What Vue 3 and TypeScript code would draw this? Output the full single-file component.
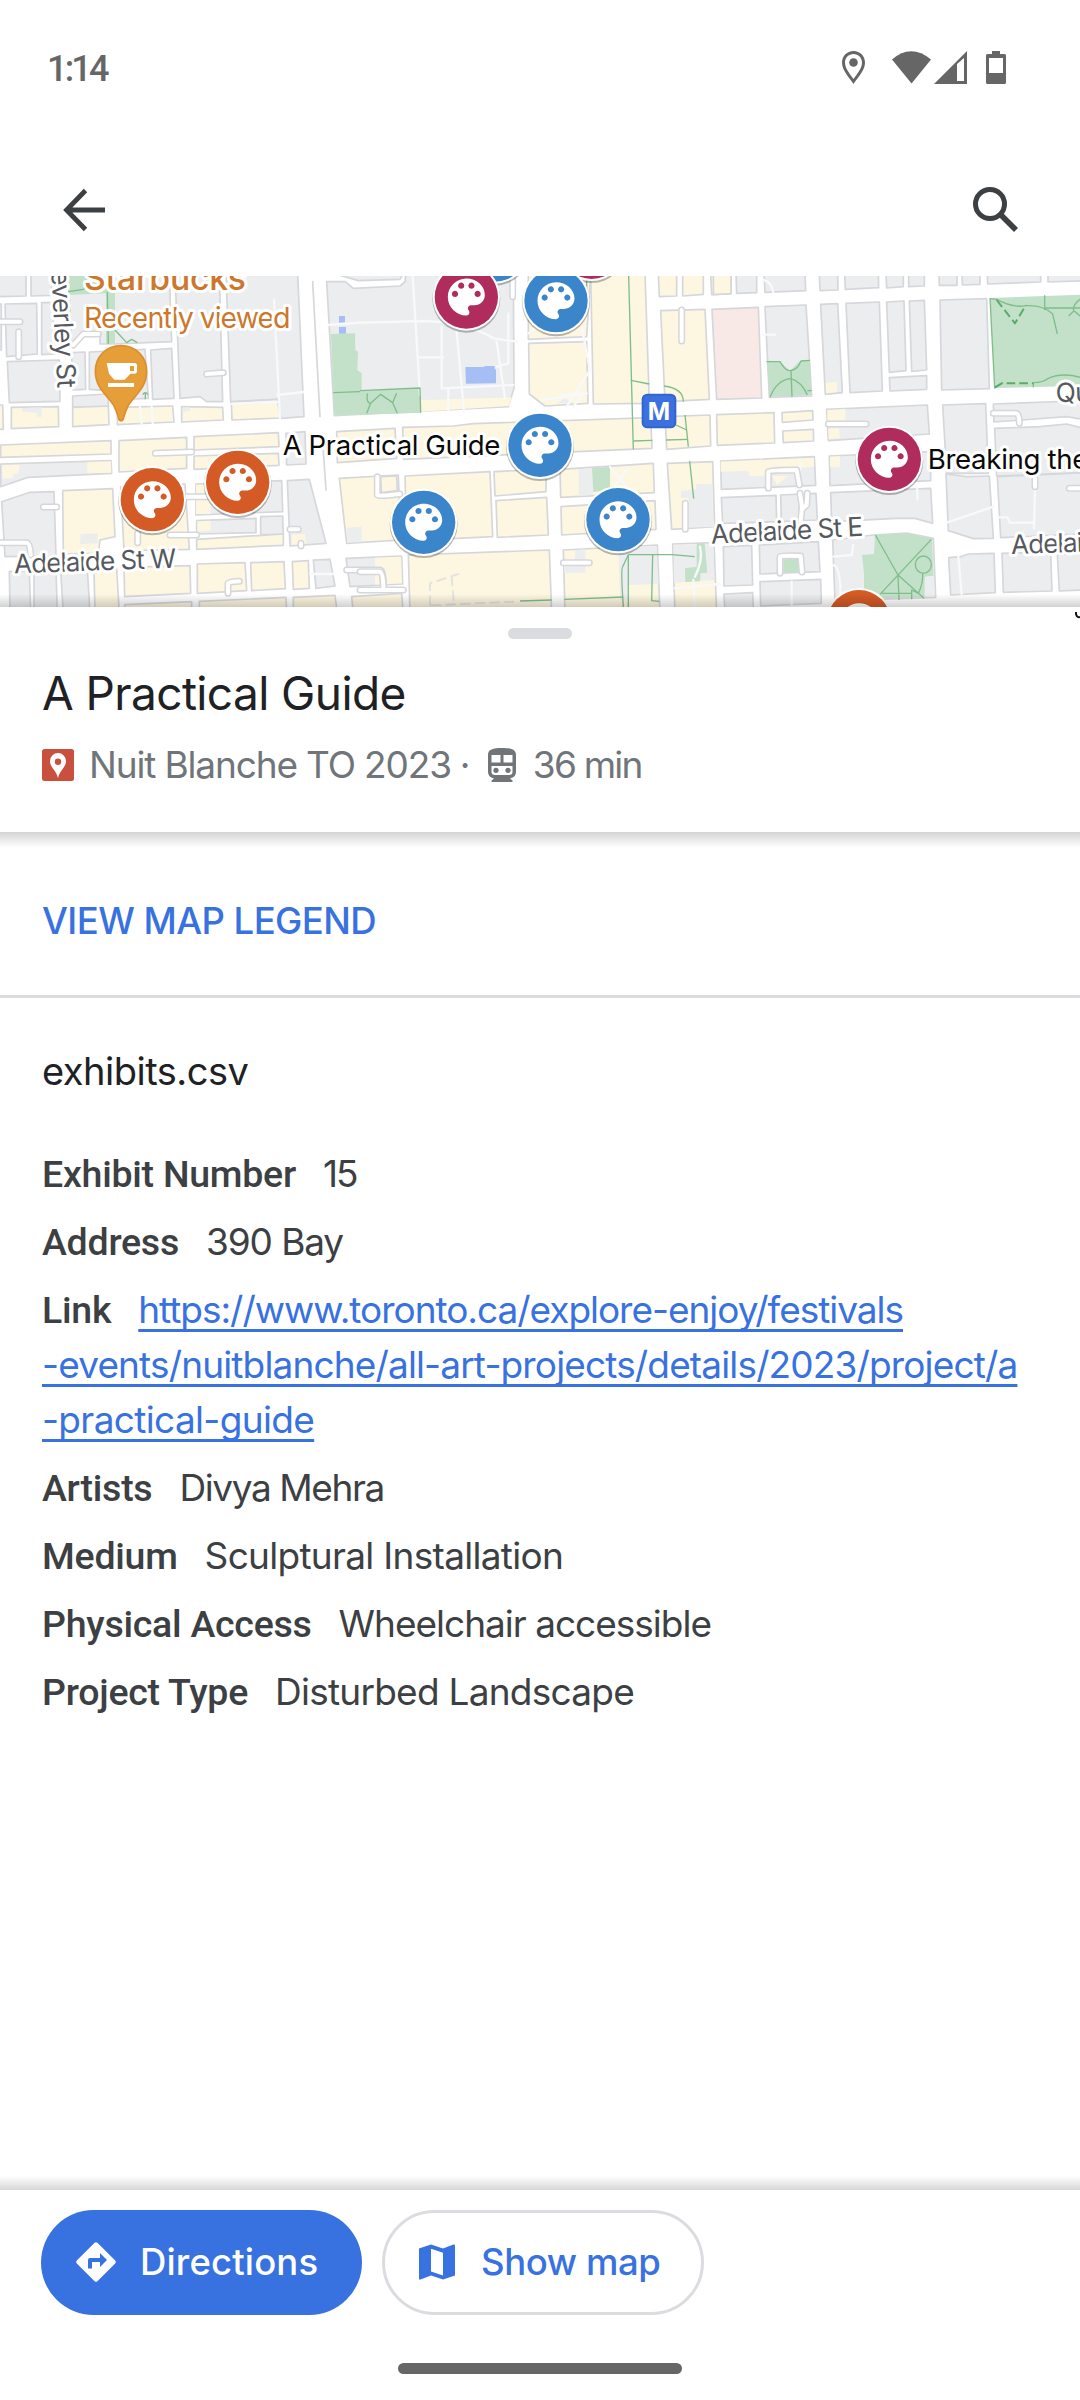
<script setup lang="ts">
interface Block { c: string; p: string }
interface Tile { x: number; blocks: Block[]; roads: string[]; faint: string[]; paths: string[] }
interface Marker { x: number; y: number; c: string }
interface Field { label: string; value: string; key: string }

const parse = (c: string, list: string): Block[] => list.trim().split(/\s*;\s*/).filter(Boolean).map((p) => ({ c, p }))

// Map geometry is kept at three units per pixel, in three tiles of 1080 units.
const tiles: Tile[] = [
  {
    x: 0,
    blocks: [
      ...parse('g', `-10,40 78,40 78,108 -10,110; 93,40 155,40 155,106 93,108; 205,40 508,40 515,245 345,252 300,252 300,218 250,222 215,255;
        525,40 658,40 668,425 620,425 600,410 540,415; 678,40 893,40 912,470 842,475 832,418 692,425; 1000,40 1210,40 1200,58 1075,62;
        980,65 1036,65 1060,85 1200,78 1215,65 1218,40 1540,40 1542,385 1525,440 1003,467; 15,132 110,130 112,282 20,290; -10,132 4,132 4,270 -10,270; 125,128 158,128 165,282 125,284;
        22,305 178,300 180,424 28,428; 215,278 255,276 257,388 218,390; 268,276 435,268 445,415 330,420 325,392 268,388; 452,270 515,265 522,415 458,418;
        2,612 333,602 335,640 85,652 2,680; 858,520 915,515 918,612 860,615; 5,725 90,697 162,695 168,888 15,890; 588,672 845,662 848,755 588,765;
        590,782 768,775 768,818 590,822; 782,770 848,768 850,824 782,824; 862,662 928,658 978,850 870,858; 28,935 88,932 92,1060 30,1060; 102,935 168,930 172,1060 102,1060;
        182,932 262,928 270,1060 190,1060; 940,900 990,898 1005,978 948,985; 1038,895 1205,888 1208,972 1050,980; 218,408 325,402 325,440 218,442`),
      ...parse('y', `34,442 175,440 176,500 34,506; -10,435 8,435 10,508 -10,508; 218,442 325,438 327,494 218,500; 352,442 518,438 522,486 352,494; 545,440 668,442 670,480 545,486; 694,426 832,418 842,474 696,480;
        2,555 333,542 333,582 2,592; 357,542 560,532 560,625 357,636; 582,530 835,518 837,560 582,570; 582,588 835,580 837,616 582,628;
        1010,515 1185,505 1190,595 1012,608; 188,692 338,686 345,830 300,840 295,880 190,882; 362,680 555,672 568,868 372,872; 590,838 850,822 850,856 590,868;
        1018,655 1195,645 1202,840 1040,850; 282,930 350,925 358,1060 285,1060; 372,922 570,917 572,1000 374,1010; 374,1034 575,1025 575,1060 374,1060;
        592,912 735,908 740,992 592,1000; 752,908 852,905 856,986 755,992; 598,1024 858,1012 860,1060 598,1060; 877,905 925,902 928,985 880,988;
        880,1012 1005,1006 1012,1060 880,1060; 1055,1010 1205,1000 1210,1060 1060,1060`),
      ...parse('gf', '66,444 125,442 125,470 112,470 110,458 66,455; 242,823 293,820 293,850 240,852; 1040,803 1085,800 1085,846 1042,848; 548,442 570,442 570,452 548,455'),
      ...parse('yf', '5,616 58,614 56,640 40,642 38,654 8,656; 262,606 333,604 334,638 262,640; 588,674 628,674 632,762 588,762; 592,784 632,782 632,812 592,814; 875,824 915,822 918,852 876,854; 1125,893 1203,890 1206,970 1125,974'),
      ...parse('n', '205,40 345,40 345,250 318,252 318,100 205,105; 993,222 1065,220 1066,270 1074,275 1072,330 1085,340 1085,393 1258,387 1262,458 1003,466'),
      ...parse('b', '1017,168 1035,168 1035,188 1017,188; 1017,201 1038,201 1038,221 1017,221')
    ],
    roads: ['M-10 185H60', 'M56 215V290', 'M620 342L670 338', 'M466 580L575 576', 'M130 741H170', 'M413 820V848', 'M510 825H590', 'M545 710H640', 'M0 848H80Q90 848 92 885', 'M684 1000V970Q690 965 718 964', 'M870 808H895', 'M903 850V858', 'M1040 930H1140Q1150 930 1150 975', 'M220 255L250 222H295'],
    faint: ['M822 120L840 475', 'M832 405L912 396', 'M696 432L832 426', 'M420 440L425 492', 'M455 440L458 490', 'M930 942H1000', 'M985 195L1080 188'],
    paths: ['M205 95L250 88L300 48', 'M322 95L325 252', 'M345 210L380 248L395 238L412 248', 'M1000 398L1080 395', 'M436 400v18M428 404q8 -12 16 0']
  },
  {
    x: 1080,
    blocks: [
      ...parse('y', `505,40 692,40 680,230 505,238; 506,250 680,245 684,430 555,438 508,402; 692,40 855,40 868,430 700,432; 895,40 950,40 950,108 898,110;
        968,40 1030,40 1030,103 968,108; 1052,40 1113,40 1113,101 1055,104; 902,152 1035,148 1048,418 915,425; 128,502 280,498 340,491 872,473 876,565 130,598;
        915,470 1050,465 1052,558 920,568; 1070,464 1242,458 1244,549 1072,556; 135,648 390,635 398,830 140,843; 62,650 110,648 112,692 64,698;
        402,635 558,628 558,695 405,708; 408,722 560,712 565,825 412,832; 600,628 880,610 883,698 602,712; 603,740 885,722 888,808 605,825;
        922,610 1058,605 1064,800 935,808; 145,885 568,870 575,1060 150,1060; 610,870 892,855 900,1060 615,1060; 938,852 1062,848 1070,1060 945,1060`),
      ...parse('p', '1056,148 1195,142 1205,414 1070,418'),
      ...parse('yf', '183,420 455,412 448,438 183,455'),
      ...parse('gf', '655,628 700,624 700,705 657,708; 985,690 1008,688 1010,672 1056,672 1060,800 988,803; 645,870 676,868 676,938 612,938 612,908 645,908; 775,862 890,858 896,972 805,975 808,1018 780,1020; 940,856 1060,852 1064,960 942,968; 590,430 615,415 640,430; 963,692 1000,690 1000,712 963,714'),
      ...parse('n', '0,393 178,387 182,458 0,464; 696,624 750,620 750,690 700,696; 1010,852 1034,850 1042,938 1022,940 1020,964 976,966 975,925 1010,920'),
      ...parse('b', '316,321 372,321 374,318 404,318 404,328 408,328 408,370 318,371')
    ],
    roads: ['M965 150V243', 'M976 730V808', 'M610 908H688', 'M0 935H60Q70 940 70 985', 'M0 990H130', 'M52 650V705Q54 710 120 702', 'M458 60V110'],
    faint: ['M0 188L200 183Q330 190 400 235L470 245', 'M158 48L180 405', 'M175 292H250', 'M245 200V385L460 375', 'M290 215L312 455', 'M265 450V385', 'M410 245L435 415', 'M445 160V310L410 320', 'M544 420L680 400', 'M620 440L690 330', 'M600 405L670 400L640 440', 'M665 200L690 330', 'M505 220L560 180', 'M1000 960L1005 1040', 'M945 985L1080 972', 'M750 620L800 680M760 680L800 630', 'M1020 860Q1030 900 1005 950'],
    paths: ['M806 48L820 568', 'M680 48V110', 'M812 361L868 372', 'M912 378Q970 385 970 425', 'M975 465L985 560', 'M948 495L980 510', 'M820 543L877 541', 'M918 540L984 538', 'M989 603L1001 716', 'M805 884L788 920Q782 925 790 1041', 'M805 884V1041', 'M805 884H893L936 884L1004 890', 'M878 884L875 1022L898 1024', 'M480 1023L575 1020', 'M613 1018L790 1011', 'M0 392L180 384L182 458', 'M22 400Q18 430 32 430L62 403L98 428L110 400M32 430L20 460M98 428L112 460']
  },
  {
    x: 2160,
    blocks: [
      ...parse('g', `48,40 110,40 110,98 50,100; 132,40 255,40 257,92 135,97; 298,40 353,40 354,90 300,92; 374,40 475,40 476,83 376,88; 498,40 550,40 550,80 500,84;
        566,40 613,40 613,78 566,80; 657,40 711,40 711,76 658,76; 726,40 780,40 780,73 727,75; 802,40 962,40 962,66 803,72; 984,40 1090,40 1090,62 984,66;
        135,140 258,135 275,408 148,412; 302,133 353,131 367,398 316,403; 378,130 478,126 487,393 390,398; 500,126 552,123 558,332 508,337; 568,123 613,121 620,330 575,334;
        508,353 620,347 620,388 510,393; 660,120 800,116 808,386 665,390; 320,448 622,435 628,522 325,542; 668,435 797,431 805,640 680,640;
        820,432 1090,422 1090,478 1040,470 905,480 822,486; 824,505 960,500 1040,492 1090,505 1090,638 830,648; 2,603 283,590 287,676 4,688; 328,588 632,575 632,662 330,677;
        4,713 168,706 170,785 8,790; 182,705 288,700 292,780 184,785; 332,698 632,685 638,790 585,775 530,775 335,785; 678,642 740,650 808,648 820,835 760,836 685,812;
        832,650 1090,638 1090,822 842,833; 10,860 95,856 98,975 12,978; 118,855 295,845 300,935 120,942; 120,965 302,958 304,1030 122,1038; 12,1002 98,998 100,1045 14,1045;
        338,840 460,825 560,819 640,835 647,1012 345,1022; 686,893 722,890 745,882 822,880 826,998 692,1005; 846,880 992,876 996,993 850,997; 1012,885 1090,878 1090,990 1018,993`),
      ...parse('y', '186,458 278,452 279,480 187,487; 188,513 280,508 281,543 190,548'),
      ...parse('yf', '2,605 282,593 282,620 235,625 160,632 130,648 88,648 85,632 2,635; 322,450 377,447 376,480 322,484; 325,506 356,504 360,534 326,538; 330,590 360,588 360,620 330,622; 317,368 350,365 352,396 318,400; 158,648 205,648 170,675'),
      ...parse('yo', '-20,40 33,40 33,101 -20,104'),
      ...parse('n', '140,305 180,305 210,332 240,303 270,301 274,406 150,410; 810,114 1090,104 1090,378 824,384; 465,825 560,819 636,836 640,948 614,950 614,1010 480,1015 432,985 432,940 426,885 462,882; 190,898 236,896 236,936 190,936'),
      ...parse('gf', '618,950 642,948 644,1008 618,1010')
    ],
    roads: ['M325 492H438', 'M145 685V635Q148 630 230 630L238 675', 'M180 940V890Q185 886 242 888L246 936', 'M240 700L246 740L242 785', 'M262 700L260 735L246 748', 'M820 460H888Q898 460 898 490', 'M945 655V680', 'M1048 685H1090'],
    faint: ['M130 60Q155 65 160 98', 'M130 224H165', 'M680 788L820 740', 'M945 680L942 805', 'M835 772H862L870 788H940', 'M715 890L725 1003', 'M340 890L395 885L400 855', 'M340 915Q362 920 362 1015', 'M592 680V718', 'M215 965V1035', 'M240 605V630'],
    paths: ['M140 305H180L190 320Q210 345 235 318L243 303L270 301', 'M150 412Q170 360 212 356Q245 365 262 405M213 332L216 410M262 392H275', 'M810 114L824 384L850 368', 'M810 116L830 118Q880 145 920 137Q970 135 998 162L1012 222M974 106V150M975 144H1085M1085 115Q1060 130 1060 150M1046 168L1062 152L1080 168', 'M940 368Q970 368 985 355Q1030 335 1090 355M940 368V382', 'M466 825L534 945L537 1020M634 838L480 1003M534 945L612 1015M485 1000H575M608 940Q610 970 595 1000L575 990V1018', 'M586 914a24 26 0 1 0 48 0a24 26 0 1 0 -48 0']
  }
]

const orange = '#d45a26'
const blue = '#3b85ca'
const plum = '#b02c5c'
const markers: Marker[] = [
  { x: 1485, y: -30, c: blue }, { x: 1775, y: -38, c: plum }, { x: 1399, y: 111, c: plum }, { x: 1668, y: 122, c: blue },
  { x: 457, y: 719, c: orange }, { x: 713, y: 667, c: orange }, { x: 1620, y: 556, c: blue }, { x: 1271, y: 787, c: blue },
  { x: 1854, y: 779, c: blue }, { x: 2668, y: 598, c: plum }, { x: 2577, y: 1085, c: orange }
]

const linkLines = ['https://www.toronto.ca/explore-enjoy/festivals', '-events/nuitblanche/all-art-projects/details/2023/project/a', '-practical-guide']
const before: Field[] = [
  { label: 'Exhibit Number', value: '15', key: 'number' },
  { label: 'Address', value: '390 Bay', key: 'address' }
]
const after: Field[] = [
  { label: 'Artists', value: 'Divya Mehra', key: 'artists' },
  { label: 'Medium', value: 'Sculptural Installation', key: 'medium' },
  { label: 'Physical Access', value: 'Wheelchair accessible', key: 'access' },
  { label: 'Project Type', value: 'Disturbed Landscape', key: 'type' }
]
</script>

<template>
  <div class="screen">
    <header class="status">
      <span class="clock">1:14</span>
      <svg class="status-icons" width="168" height="36" viewBox="0 0 168 36" fill="#666">
        <path fill-rule="evenodd" d="M13.500 1C7 1 2 6 2 12.500C2 20 8 26 13.500 34C19 26 25 20 25 12.500C25 6 20 1 13.500 1ZM13.500 4C18.500 4 22 8 22 12.500C22 18 17.500 23.500 13.500 29C9.500 23.500 5 18 5 12.500C5 8 8.500 4 13.500 4Z" />
        <circle cx="13.500" cy="12.500" r="4.300" />
        <path d="M52 9.500Q71 -7 91 9.500L71.500 33.500Z" />
        <path fill-rule="evenodd" d="M94 34L127 1V34ZM117 14V31H124V8Z" />
        <path fill-rule="evenodd" d="M152 1h8v3h4.500q1.500 0 1.500 1.500v27q0 1.500-1.500 1.500h-17q-1.500 0-1.500-1.500v-27q0-1.500 1.500-1.500h4.500zM149 8v15h14V8z" />
      </svg>
    </header>
    <nav class="toolbar">
      <svg width="44" height="44" viewBox="0 0 44 44" fill="none" stroke="#3c4043" stroke-width="4.800"><path d="M43 22H6M23.500 2.500L4.500 22L23.500 41.500" /></svg>
      <svg width="48" height="48" viewBox="0 0 48 48" fill="none" stroke="#3c4043"><circle cx="18" cy="18" r="14.500" stroke-width="5" /><path d="M29 29L44 44" stroke-width="5.600" /></svg>
    </nav>

    <div class="map">
      <svg width="1080" height="331" viewBox="0 48 3240 993">
        <defs>
          <linearGradient id="shade" x1="0" y1="0" x2="0" y2="1"><stop offset="0" stop-color="#000" stop-opacity="0" /><stop offset="1" stop-color="#000" stop-opacity=".18" /></linearGradient>
        </defs>
        <g v-for="t in tiles" :key="t.x" :transform="`translate(${t.x},0)`">
          <polygon v-for="(b, i) in t.blocks" :key="i" :points="b.p" :class="['block', b.c]" />
          <path v-for="d in t.faint" :key="d" :d="d" class="faint" />
          <path v-for="d in t.roads" :key="'e' + d" :d="d" class="casing" />
          <path v-for="d in t.roads" :key="'r' + d" :d="d" class="road" />
          <path v-for="d in t.paths" :key="d" :d="d" class="trail" />
        </g>
        <path class="strip" d="M938 65L960 470M968 545L978 690" />
        <path class="dash" d="M1290 1035V970L1375 942M1355 950L1362 1035M1295 1036L1540 1025" />
        <path class="trail thick" stroke-dasharray="26 12" d="M2990 120L3045 190L3078 135M2985 382L3005 370H3100" />
        <g class="transit">
          <rect x="1928" y="404" width="98" height="98" rx="14" />
          <text x="1977" y="479" text-anchor="middle">M</text>
        </g>
        <g class="street">
          <text transform="translate(154,32) rotate(87)" textLength="352">everley St</text>
          <text transform="translate(43,940) rotate(-2)" textLength="485">Adelaide St W</text>
          <text transform="translate(2134,851) rotate(-3)" textLength="456">Adelaide St E</text>
          <text transform="translate(3034,882) rotate(-2)" textLength="456">Adelaide St E</text>
          <text transform="translate(3168,427) rotate(-2)">Queen St E</text>
        </g>
        <g class="place">
          <text class="brand" x="252" y="89" textLength="486">Starbucks</text>
          <text class="recent" x="252" y="205" textLength="620">Recently viewed</text>
        </g>
        <g class="pin">
          <path d="M363 257C318 257 286 291 286 334C286 385 322 405 342 438C352 456 354 470 357 479Q363 486 369 479C372 470 374 456 384 438C404 405 440 385 440 334C440 291 408 257 363 257Z" />
          <path class="cup" fill-rule="evenodd" d="M320 309H403Q411 309 411 317V333Q411 341 403 341H391L374 359H343L327 341ZM390 318V333H402V318ZM324 369H402V381H324Z" />
        </g>
        <g v-for="(m, i) in markers" :key="i" :transform="`translate(${m.x},${m.y})`">
          <circle cy="5" r="102" fill="#000" opacity=".28" />
          <circle r="101" fill="#fff" />
          <circle r="95" :fill="m.c" />
          <path transform="scale(6.17) translate(-12,-12)" fill="#fff" fill-rule="evenodd" d="M12 3c-4.970 0-9 4.030-9 9s4.030 9 9 9c.83 0 1.500-.67 1.500-1.500 0-.39-.15-.74-.39-1.010-.23-.26-.38-.61-.38-.99 0-.83.67-1.500 1.500-1.500H16c2.760 0 5-2.240 5-5 0-4.420-4.030-8-9-8zm-5.500 9c-.83 0-1.500-.67-1.500-1.500S5.670 9 6.500 9 8 9.670 8 10.500 7.330 12 6.500 12zm3-4C8.670 8 8 7.330 8 6.500S8.670 5 9.500 5s1.500.67 1.500 1.500S10.330 8 9.500 8zm5 0c-.83 0-1.500-.67-1.500-1.500S13.670 5 14.500 5s1.500.67 1.500 1.500S15.330 8 14.500 8zm3 4c-.83 0-1.500-.67-1.500-1.500S16.670 9 17.500 9s1.500.67 1.500 1.500-.67 1.500-1.500 1.500z" />
        </g>
        <g class="exhibit">
          <text x="848" y="584" textLength="652">A Practical Guide</text>
          <text x="2783" y="626">Breaking the Mold</text>
        </g>
        <rect x="0" y="1002" width="3240" height="40" fill="url(#shade)" />
      </svg>
    </div>

    <section class="sheet">
      <svg class="edge-mark" width="5" height="8" viewBox="0 0 5 8" fill="none" stroke="#111" stroke-width="2"><path d="M1 0v2Q2 6 5 5" /></svg>
      <div class="handle"></div>
      <h1>A Practical Guide</h1>
      <div class="subtitle">
        <svg width="32" height="32" viewBox="0 0 32 32"><rect width="32" height="32" rx="2.500" fill="#c94f3f" /><path fill="#fff" fill-rule="evenodd" d="M16 4a8 8 0 0 0-8 8.200C8 18 14 21 16 29C18 21 24 18 24 12.200A8 8 0 0 0 16 4ZM16 9.500a3.200 3.200 0 1 1 0 6.400a3.200 3.200 0 0 1 0-6.400Z" /></svg>
        <span class="map-name">Nuit Blanche TO 2023</span>
        <span class="dot">·</span>
        <svg class="train" width="28" height="34" viewBox="0 0 28 34" fill="#70757a"><path fill-rule="evenodd" d="M14 0C5 0 0 1.500 0 7V24Q0 29 6 30.500L3.500 32.500V34H24.500V32.500L22 30.500Q28 29 28 24V7C28 1.500 23 0 14 0ZM3.500 7H12.500V14.500H3.500ZM15.500 7H24.500V14.500H15.500ZM3.500 18H24.500V24Q24.500 27 21 27H7Q3.500 27 3.500 24Z" /><circle cx="8" cy="22.300" r="2.600" /><circle cx="20" cy="22.300" r="2.600" /></svg>
        <span class="duration">36 min</span>
      </div>
    </section>

    <section class="legend"><a>VIEW MAP LEGEND</a></section>

    <main class="details">
      <h2>exhibits.csv</h2>
      <p v-for="f in before" :key="f.key"><b>{{ f.label }}</b><span :class="'v-' + f.key">{{ f.value }}</span></p>
      <p class="link-row">
        <b>Link</b><a class="first">{{ linkLines[0] }}</a><br /><a class="second">{{ linkLines[1] }}</a><br /><a class="third">{{ linkLines[2] }}</a>
      </p>
      <p v-for="f in after" :key="f.key"><b>{{ f.label }}</b><span :class="'v-' + f.key">{{ f.value }}</span></p>
    </main>

    <footer class="actions">
      <div class="buttons">
        <button class="primary">
          <svg width="40" height="40" viewBox="0 0 40 40"><path fill="#fff" fill-rule="evenodd" d="M18.600 .8Q20 -.4 21.400 .8L39.200 18.600Q40.400 20 39.200 21.400L21.400 39.200Q20 40.400 18.600 39.200L.8 21.400Q-.4 20 .8 18.600ZM12 26.500H16V20H24V25L31 18L24 11V16H14Q12 16 12 18Z" /></svg>
          <span>Directions</span>
        </button>
        <button class="outline">
          <svg width="36" height="36" viewBox="0 0 36 36"><path fill="#3871e0" fill-rule="evenodd" d="M0 4.500L12 .5L24 4.500L34.500 .5Q36 0 36 1.500V31.500L24 35.500L12 31.500L1.500 35.500Q0 36 0 34.500ZM12 4.800V27.500L24 31.500V8.800Z" /></svg>
          <span>Show map</span>
        </button>
      </div>
      <div class="home"></div>
    </footer>
  </div>
</template>

<style>
body { background: #fff; }
</style>

<style scoped>
.screen { width: 1080px; height: 2400px; background: #fff; overflow: hidden; display: flex; flex-direction: column; font-family: Inter, "Open Sans", sans-serif; color: #3c4043; }
svg { display: block; flex: none; }
.status { height: 136px; box-sizing: border-box; padding: 0 72px 0 47px; display: flex; justify-content: space-between; align-items: center; }
.clock { font: 500 36px/40px Roboto, sans-serif; color: #666; letter-spacing: -2.800px; padding-top: 1px; }
.toolbar { height: 140px; box-sizing: border-box; padding: 8px 60px 0 62px; display: flex; justify-content: space-between; align-items: center; }
.map { height: 331px; flex: none; overflow: hidden; }
.block { stroke: #d6d7db; stroke-width: 5; stroke-linejoin: round; }
.g, .gf { fill: #ecedef; }
.y, .yf, .yo { fill: #fdf6e0; }
.p { fill: #f8e9e7; }
.n { fill: #c3e1c9; }
.b { fill: #a5bff5; }
.gf, .yf, .n, .b { stroke: none; }
.faint, .casing, .road, .trail, .strip, .dash { fill: none; stroke-linecap: round; stroke-linejoin: round; }
.faint { stroke: #f8f9fa; stroke-width: 7; }
.casing { stroke: #d6d7db; stroke-width: 21; }
.road { stroke: #fff; stroke-width: 12; }
.trail { stroke: #7fbe8b; stroke-width: 4; stroke-linecap: butt; }
.thick { stroke: #5bab6b; stroke-width: 6; }
.strip { stroke: #d6d7db; stroke-width: 5; }
.dash { stroke: #e4e3df; stroke-width: 6; stroke-dasharray: 26 18; }
.transit rect { fill: #3a70df; stroke: #3465ca; stroke-width: 6; }
.transit text { fill: #fff; font: 700 72px Roboto, sans-serif; }
.map text { font-family: Inter, sans-serif; }
.street text, .place text, .exhibit text { stroke: #fff; stroke-width: 18; stroke-linejoin: round; paint-order: stroke; }
.street text { font-size: 79px; fill: #55595e; letter-spacing: -1.500px; }
.place text { fill: #cc772c; }
.map .brand { font-size: 101px; font-weight: 500; }
.map .recent { font-size: 86px; }
.exhibit text { font-size: 83px; fill: #0a0a0a; letter-spacing: -1px; }
.pin path { fill: #e59e38; stroke: #dc8f32; stroke-width: 5; }
.pin .cup { fill: #fff; stroke: none; }

.sheet { position: relative; z-index: 1; height: 225px; flex: none; box-sizing: border-box; padding: 21px 42px 0; background: #fff; }
.sheet::after { content: ""; position: absolute; left: 0; right: 0; top: 100%; height: 16px; background: linear-gradient(rgba(0, 0, 0, .17), rgba(0, 0, 0, .09) 45%, rgba(0, 0, 0, 0)); }
.edge-mark { position: absolute; right: 0; top: 5px; }
.handle { width: 64px; height: 11px; border-radius: 6px; background: #dadce0; margin: 0 auto; }
h1 { margin: 24px 0 0; font-size: 46px; font-weight: 400; line-height: 60px; color: #202124; letter-spacing: -.6px; }
.subtitle { display: flex; align-items: center; height: 46px; margin-top: 19px; font-size: 37px; color: #70757a; white-space: nowrap; }
.subtitle span { line-height: 44px; padding-bottom: 1px; }
.map-name { margin-left: 15px; letter-spacing: -1.150px; }
.dot { margin-left: 9px; width: 28px; }
.duration { margin-left: 17px; letter-spacing: -1.800px; }

.legend { height: 166px; box-sizing: border-box; flex: none; padding: 61px 42px 0; border-bottom: 3px solid #dadce0; }
.legend a { font: 500 36.500px/56px Inter, sans-serif; color: #3871e0; letter-spacing: -.55px; }

.details { flex: 1; padding: 46px 42px 0; font-size: 37px; }
h2 { margin: 0 0 47px; font: 400 38px/55px Inter, sans-serif; color: #202124; letter-spacing: -.5px; }
p { margin: 0 0 13px; line-height: 55px; white-space: nowrap; }
b { font-family: Roboto, sans-serif; font-weight: 500; font-size: 37.500px; line-height: 1; margin-right: 27px; letter-spacing: -.25px; }
p a { color: #3871e0; text-decoration: underline; text-decoration-thickness: 3px; text-underline-offset: 6px; text-decoration-skip-ink: none; }
.first { letter-spacing: -1.030px; }
.second { letter-spacing: -.850px; }
.third { letter-spacing: -.650px; }
.v-number { letter-spacing: -2px; }
.v-address { letter-spacing: -1.100px; }
.v-artists { letter-spacing: -1.400px; }
.v-medium { letter-spacing: -.700px; }
.v-access { letter-spacing: -1px; }
.v-type { letter-spacing: -.750px; }

.actions { position: relative; height: 210px; flex: none; background: #fff; }
.actions::before { content: ""; position: absolute; left: 0; right: 0; bottom: 100%; height: 14px; background: linear-gradient(rgba(0, 0, 0, 0), rgba(0, 0, 0, .08) 50%, rgba(0, 0, 0, .16)); }
.buttons { display: flex; gap: 20px; padding: 20px 41px 0; }
button { box-sizing: border-box; width: 321px; height: 105px; border-radius: 53px; border: 0; padding: 0 0 1px 35px; display: flex; align-items: center; font: 500 36.500px Inter, sans-serif; letter-spacing: -.5px; }
.primary { background: #3871e0; color: #fff; gap: 24px; letter-spacing: .15px; }
.outline { width: 322px; border: 3px solid #dadce0; background: #fff; color: #3871e0; gap: 26px; padding-left: 34px; letter-spacing: -.4px; }
.home { width: 284px; height: 11px; border-radius: 6px; background: #666; margin: 48px auto 0; }
</style>
